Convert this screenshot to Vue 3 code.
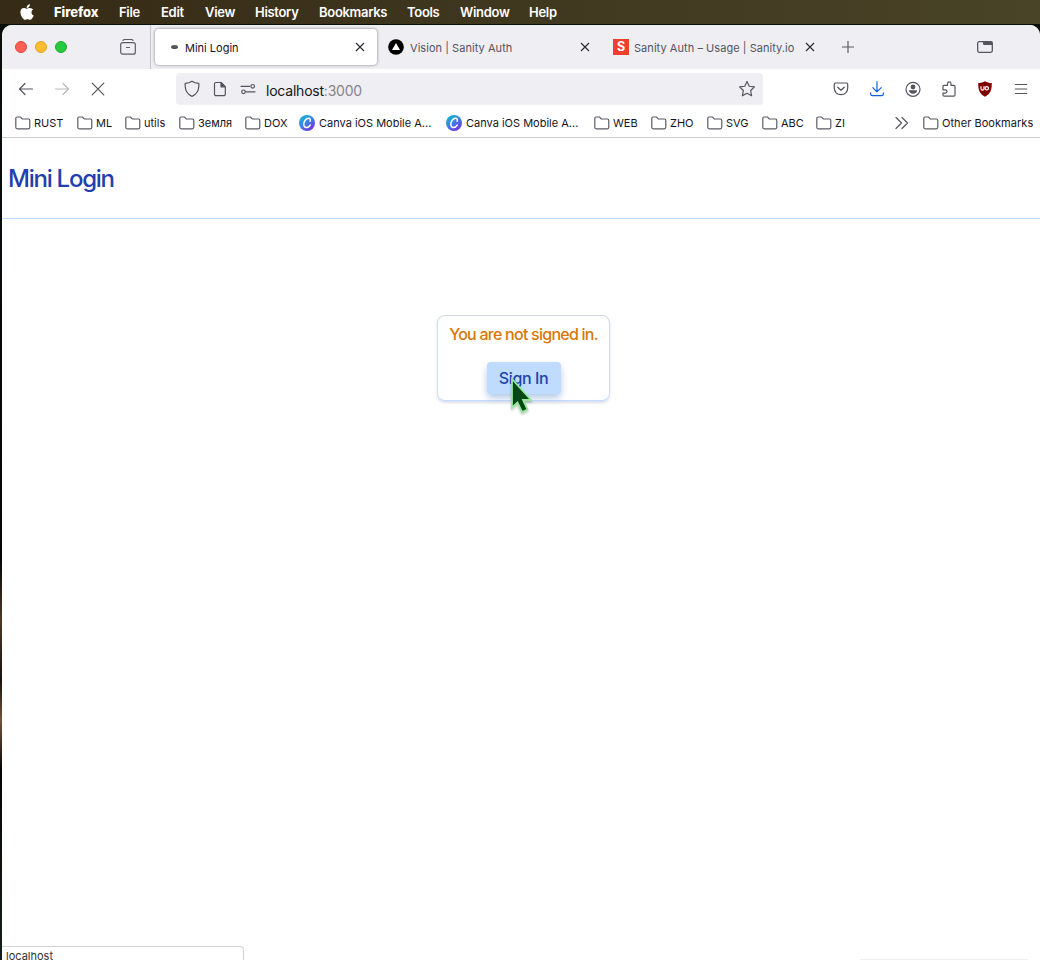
<script setup>
const menus = [
  { t: 'File', w: 42 }, { t: 'Edit', w: 44 }, { t: 'View', w: 50 }, { t: 'History', w: 64 },
  { t: 'Bookmarks', w: 88 }, { t: 'Tools', w: 53 }, { t: 'Window', w: 69 }, { t: 'Help', w: 40 },
]
const bookmarks = [
  { t: 'RUST', w: 62 }, { t: 'ML', w: 48 }, { t: 'utils', w: 54 }, { t: 'Земля', w: 66 }, { t: 'DOX', w: 54 },
  { t: 'Canva iOS Mobile A...', w: 147, c: true }, { t: 'Canva iOS Mobile A...', w: 148, c: true },
  { t: 'WEB', w: 57 }, { t: 'ZHO', w: 56 }, { t: 'SVG', w: 55 }, { t: 'ABC', w: 54 }, { t: 'ZI', w: 79 },
]
</script>

<template>
  <div class="desktop">
    <header class="menubar">
      <svg class="apple" width="14" height="16" viewBox="0 0 14 16"><path fill="#fff" d="M9.900.2c.1 1.300-.4 2.100-1 2.800-.6.700-1.400 1.100-2.200 1C6.600 2.800 7 2 7.600 1.300 8.200.7 9.200.2 9.900.2zM13.200 5.600c-1.100.700-1.700 1.600-1.700 2.800 0 1.500.9 2.500 2.200 3-.4 1.200-1 2.200-1.700 3.100-.6.800-1.300 1.300-2.200 1.200-.8 0-1.300-.5-2.300-.5s-1.500.5-2.300.5c-.9.100-1.600-.5-2.200-1.300C1.400 12.500.3 9.800.4 7.900.5 5.700 1.900 4.200 3.800 4.100c1.100 0 1.900.6 2.800.6S8.600 4 9.900 4c1.300.1 2.500.6 3.300 1.600z" /></svg>
      <span class="appname">Firefox</span>
      <span v-for="m in menus" :key="m.t" class="menu" :style="{ width: m.w + 'px' }">{{ m.t }}</span>
    </header>

    <main class="window">
      <div class="tabs">
        <div class="lights"><i class="red" /><i class="yellow" /><i class="green" /></div>
        <svg class="archive" width="18" height="18" viewBox="0 0 18 18" fill="none" stroke="#5b5b66" stroke-width="1.200" stroke-linecap="round"><path d="M4 2.400C4.300 1.700 4.700 1.500 5.500 1.500h7c.8 0 1.200.2 1.500.9" /><rect x="1.700" y="4.600" width="14.600" height="11.600" rx="2" /><path d="M7.500 9.500h3" /></svg>
        <div class="tab active">
          <i class="loader" /><span class="label">Mini Login</span>
          <svg class="x" width="10" height="10" viewBox="0 0 10 10"><path d="M1 1l8 8M9 1l-8 8" /></svg>
        </div>
        <div class="tab second">
          <svg width="16" height="16" viewBox="0 0 16 16"><circle cx="8" cy="8" r="7.800" /><path d="M8 4l4 7H4z" fill="#fff" /></svg>
          <span class="label">Vision | Sanity Auth</span>
          <svg class="x" width="10" height="10" viewBox="0 0 10 10"><path d="M1 1l8 8M9 1l-8 8" /></svg>
        </div>
        <div class="tab third">
          <b class="sanity">S</b>
          <span class="label">Sanity Auth – Usage | Sanity.io</span>
          <svg class="x" width="10" height="10" viewBox="0 0 10 10"><path d="M1 1l8 8M9 1l-8 8" /></svg>
        </div>
        <svg class="plus" width="12" height="12" viewBox="0 0 12 12"><path d="M6 0v12M0 6h12" stroke="#5b5b66" stroke-width="1.200" /></svg>
        <svg class="panel" width="16" height="12" viewBox="0 0 16 12"><rect x=".7" y=".7" width="14.600" height="10.600" rx="1.500" fill="none" stroke="#55545e" stroke-width="1.300" /><path d="M6 .7h9.300v3.300H7.500C6.500 4 6 3.500 6 2.700z" fill="#55545e" /></svg>
      </div>

      <div class="nav">
        <svg class="back" width="16" height="14" viewBox="0 0 16 14"><path d="M14.500 7H1.700M7 1.500L1.500 7 7 12.500" /></svg>
        <svg class="fwd" width="16" height="14" viewBox="0 0 16 14"><path d="M1.500 7h12.800M9 1.500l5.500 5.500L9 12.500" /></svg>
        <svg class="stop" width="14" height="14" viewBox="0 0 14 14"><path d="M1.200 1.200l11.600 11.600M12.800 1.200L1.200 12.800" /></svg>
        <div class="url">
          <svg class="shield" width="16" height="18" viewBox="0 0 16 18"><path d="M8 1.200C6 2.600 3.500 3.200 1.200 3.400c-.5 5.600 1.200 10.600 6.800 13 5.600-2.400 7.300-7.400 6.800-13C12.500 3.200 10 2.600 8 1.200z" /></svg>
          <svg class="page" width="14" height="16" viewBox="0 0 14 16"><path d="M3 1.500h5l4.300 4.300v7.400a1.500 1.500 0 0 1-1.500 1.500H3a1.500 1.500 0 0 1-1.500-1.500V3A1.500 1.500 0 0 1 3 1.500z" /><path d="M8 1.500v4.300h4.300z" fill="#4a4953" /></svg>
          <svg class="perm" width="16" height="12" viewBox="0 0 16 12"><path d="M1 3.300h8.500M6 8.800h9" /><circle cx="12.700" cy="3.300" r="1.800" /><circle cx="3.500" cy="8.800" r="1.800" /></svg>
          <span class="address">localhost<em>:3000</em></span>
          <svg class="star" width="18" height="18" viewBox="0 0 18 18"><path d="M9 1.500l2.250 4.750 5.200.65-3.800 3.600.95 5.250L9 13.250l-4.600 2.500.95-5.250-3.800-3.600 5.200-.65z" /></svg>
        </div>
        <div class="tools">
          <svg width="16" height="16" viewBox="0 0 16 16"><path d="M2.500 2h11a1.200 1.200 0 0 1 1.200 1.200V7c0 4-2.700 6.700-6.700 6.700S1.300 11 1.300 7V3.200A1.200 1.200 0 0 1 2.500 2z" /><path d="M4.700 6.200L8 9.200l3.300-3" /></svg>
          <svg width="16" height="16" viewBox="0 0 16 16" class="blue"><path d="M8 .7v9.800M3.800 6.700L8 10.900l4.200-4.200M1.700 11.800v1.400c0 .8.600 1.400 1.400 1.400h9.800c.8 0 1.400-.6 1.400-1.400v-1.400" /></svg>
          <svg width="16" height="16" viewBox="0 0 16 16"><circle cx="8" cy="8.300" r="7" /><circle cx="8" cy="6" r="2.400" class="fill" /><path class="fill" d="M3.900 9.200h8.200c0 2.200-1.900 3.500-4.100 3.500s-4.100-1.300-4.100-3.500z" /></svg>
          <svg width="16" height="16" viewBox="0 0 16 16"><path d="M2 7V5.600C2 4.800 2.400 4.400 3.200 4.400h3.300V2.700a1.700 1.700 0 0 1 3.500 0v1.700h2.800c.8 0 1.200.4 1.200 1.200v8.300c0 .8-.4 1.200-1.200 1.200H3.200c-.8 0-1.200-.4-1.200-1.200v-1.800h2.300a1.600 1.600 0 0 0 0-3.300H2z" /></svg>
          <svg width="16" height="16" viewBox="0 0 16 16"><path d="M8 .3c2 1.200 4.200 1.700 6.800 1.800 0 6.400-1 11-6.800 13.700C2.200 13.100 1.200 8.500 1.200 2.100 3.800 2 6 1.500 8 .3z" fill="#800000" stroke="none" /><path d="M4 5.500v2.300c0 1.700 3 1.700 3 0V5.500" stroke="#fff" stroke-width="1.200" /><circle cx="9.800" cy="7.300" r="1.700" stroke="#fff" stroke-width="1.200" /></svg>
          <svg width="16" height="16" viewBox="0 0 16 16"><path d="M2.300 3.500h11.400M2.300 8h11.400M2.300 12.500h11.400" /></svg>
        </div>
      </div>

      <div class="bookmarks">
        <div v-for="(b, i) in bookmarks" :key="i" class="bm" :style="{ width: b.w + 'px' }">
          <svg v-if="b.c" class="canva" width="16" height="16" viewBox="0 0 16 16"><defs><linearGradient :id="'g' + i" x1="0" y1="0" x2=".7" y2="1"><stop offset="0" stop-color="#08c5cd" /><stop offset=".55" stop-color="#3d7ee6" /><stop offset="1" stop-color="#7430df" /></linearGradient></defs><circle cx="8" cy="8" r="8" :fill="'url(#g' + i + ')'" /><path d="M11 6.300c.9-1.400.2-3-1.400-3-2.700 0-4.800 3.100-4.800 5.900 0 4.200 4.200 4.300 6.500.8" fill="none" stroke="#fff" stroke-width="1.400" stroke-linecap="round" /></svg>
          <svg v-else class="folder" width="16" height="14" viewBox="0 0 16 14"><path d="M2.300 1h3.200l1.800 2h6c1 0 1.500.5 1.500 1.500v6.800c0 1-.5 1.500-1.500 1.500h-11c-1 0-1.500-.5-1.500-1.500V2.500C.8 1.500 1.300 1 2.300 1z" /></svg>
          <span>{{ b.t }}</span>
        </div>
        <svg class="more" width="14" height="14" viewBox="0 0 14 14"><path d="M1 1.500L6.500 7 1 12.500M7 1.500L12.500 7 7 12.500" /></svg>
        <div class="bm other">
          <svg class="folder" width="16" height="14" viewBox="0 0 16 14"><path d="M2.300 1h3.200l1.800 2h6c1 0 1.500.5 1.500 1.500v6.800c0 1-.5 1.500-1.500 1.500h-11c-1 0-1.500-.5-1.500-1.500V2.500C.8 1.500 1.300 1 2.300 1z" /></svg>
          <span>Other Bookmarks</span>
        </div>
      </div>

      <section class="content">
        <h1>Mini Login</h1>
        <div class="card">
          <p>You are not signed in.</p>
          <button>Sign In</button>
          <svg class="cursor" width="24" height="38" viewBox="0 0 24 38"><path d="M2 2v28.500l5.500-5 4.500 9.500 5.500-2.500-4.500-9.500h8z" fill="#064514" stroke="#94e79b" stroke-width="1.800" /></svg>
        </div>
        <div class="status">localhost</div>
        <div class="edge" />
      </section>
    </main>
  </div>
</template>

<style>
body { margin: 0; overflow: hidden; }
</style>
<style scoped>
* { box-sizing: border-box; }
.desktop { width: 1040px; height: 960px; overflow: hidden; display: flex; flex-direction: column; font-family: Inter, "Liberation Sans", sans-serif; background: linear-gradient(#071009 0, #080c0b 200px, #050605 560px, #4c3a27 620px, #17120e 680px, #75543a 720px, #050504 770px, #152017 960px); }
svg { display: block; flex: none; }
.menubar { height: 24px; flex: none; background: linear-gradient(90deg, #352b16, #40371f 50%, #494327); color: #fff; display: flex; align-items: center; padding: 0 0 1px 20px; font-size: 13px; font-weight: 600; white-space: nowrap; }
.apple { margin: 0 20px 0 0; }
.appname { width: 65px; font-weight: 800; letter-spacing: -.05px; }
.menu { letter-spacing: -.3px; }
.window { flex: 1; margin: 1px 0 0 2px; background: #fff; border-radius: 10px 10px 0 0; overflow: hidden; display: flex; flex-direction: column; }
.tabs { height: 44px; flex: none; background: #efeef3; display: flex; align-items: center; }
.lights { display: flex; gap: 8px; margin-left: 13px; width: 105px; }
.lights i { width: 12px; height: 12px; border-radius: 50%; border: .5px solid; }
.red { background: #ff5f57; border-color: #e2463f !important; }
.yellow { background: #febc2e; border-color: #dfa023 !important; }
.green { background: #28c840; border-color: #1eac2c !important; }
.archive { margin-right: 13px; margin-left: -1px; }
.tab { height: 36px; display: flex; align-items: center; font-size: 11px; letter-spacing: .05px; color: #55545d; white-space: nowrap; }
.label { padding-top: 2px; }
.active { width: 222px; margin-left: 5px; background: #fff; border-radius: 4px; box-shadow: 0 0 3px #77777a; color: #15141a; padding: 0 12px 0 16px; position: relative; letter-spacing: 0; }
.active::before { content: ""; position: absolute; left: -5px; top: -4px; width: 1px; height: 44px; background: #c6c5cb; }
.loader { width: 7px; height: 4px; border-radius: 50%; background: #55545d; margin-right: 7px; }
.x { margin-left: auto; }
.x path { stroke: #2b2a33; stroke-width: 1.100; fill: none; }
.second { width: 202px; margin-left: 11px; }
.second .label { margin-left: 6px; }
.third { width: 202px; margin-left: 23px; }
.sanity { width: 16px; height: 16px; background: #f03e2f; color: #fff; font-size: 12.500px; line-height: 16px; text-align: center; margin-right: 5px; letter-spacing: 0; }
.plus { margin-left: 27px; }
.panel { margin-left: 123px; }
.nav { height: 40px; flex: none; display: flex; align-items: center; }
.nav svg, .more { fill: none; stroke: #55545e; stroke-width: 1.200; stroke-linecap: round; stroke-linejoin: round; }
.nav .fill { fill: #55545e; stroke: none; }
.nav .blue { stroke: #0c62e6; }
.back { margin-left: 16px; }
.nav .fwd { margin-left: 20px; stroke: #b9b8be; }
.stop { margin-left: 21px; }
.url { width: 587px; height: 32px; margin-left: 71px; background: #efeef3; border-radius: 4px; display: flex; align-items: center; padding: 0 7px 0 8px; }
.page { margin-left: 13px; }
.perm { margin-left: 13px; }
.address { font-size: 14px; margin-left: 10px; padding-top: 2px; color: #15141a; letter-spacing: -.22px; }
.address em { font-style: normal; color: #85848b; }
.star { margin-left: auto; }
.tools { display: flex; gap: 20px; margin-left: 70px; }
.bookmarks { height: 29px; flex: none; border-bottom: 1px solid #ccc; display: flex; align-items: center; padding-left: 13px; font-size: 11px; color: #15141a; white-space: nowrap; }
.bm { display: flex; align-items: center; flex: none; }
.bm span { margin-left: 3px; letter-spacing: 0; }
.other span { letter-spacing: .05px; }
.canva + span { margin-left: 4px !important; }
.folder { fill: none; stroke: #5b5b66; stroke-width: 1.200; }
.more { margin-right: 14px; }
.content { flex: 1; position: relative; }
h1 { margin: 0; height: 81px; padding: 0 6px; line-height: 81px; font-size: 24px; font-weight: 500; letter-spacing: -1.250px; color: #1e40af; border-bottom: 1px solid #bfdbfe; }
.card { position: relative; width: 173px; height: 86px; margin: 96px 0 0 435px; border: 1px solid #d5dae2; border-color: #d5dae2 #d1dced #bfdbfe; border-radius: 8px; box-shadow: 0 2px 3px #d9dfe8; display: flex; flex-direction: column; align-items: center; }
.card p { margin: 6px 0 16px; line-height: 24px; font-size: 16px; font-weight: 500; letter-spacing: -.75px; color: #d97706; white-space: nowrap; }
button { width: 74px; height: 32px; padding: 0; border: 0; border-radius: 4px; background: #bfdbfe; color: #1e40af; font: 500 16px Inter, sans-serif; letter-spacing: -.4px; box-shadow: 0 4px 7px #b5cae8; }
.cursor { position: absolute; left: 72px; top: 61px; filter: drop-shadow(0 2px 1px #0003); }
.status { position: absolute; left: 0; bottom: 0; width: 242px; height: 14px; border: 1px solid #d2d2d6; border-left: 0; border-bottom: 0; border-radius: 0 4px 0 0; padding-left: 4px; font-size: 11px; line-height: 19px; color: #333; }
.edge { position: absolute; right: 12px; bottom: 0; width: 168px; height: 1px; background: #eee; }
</style>
